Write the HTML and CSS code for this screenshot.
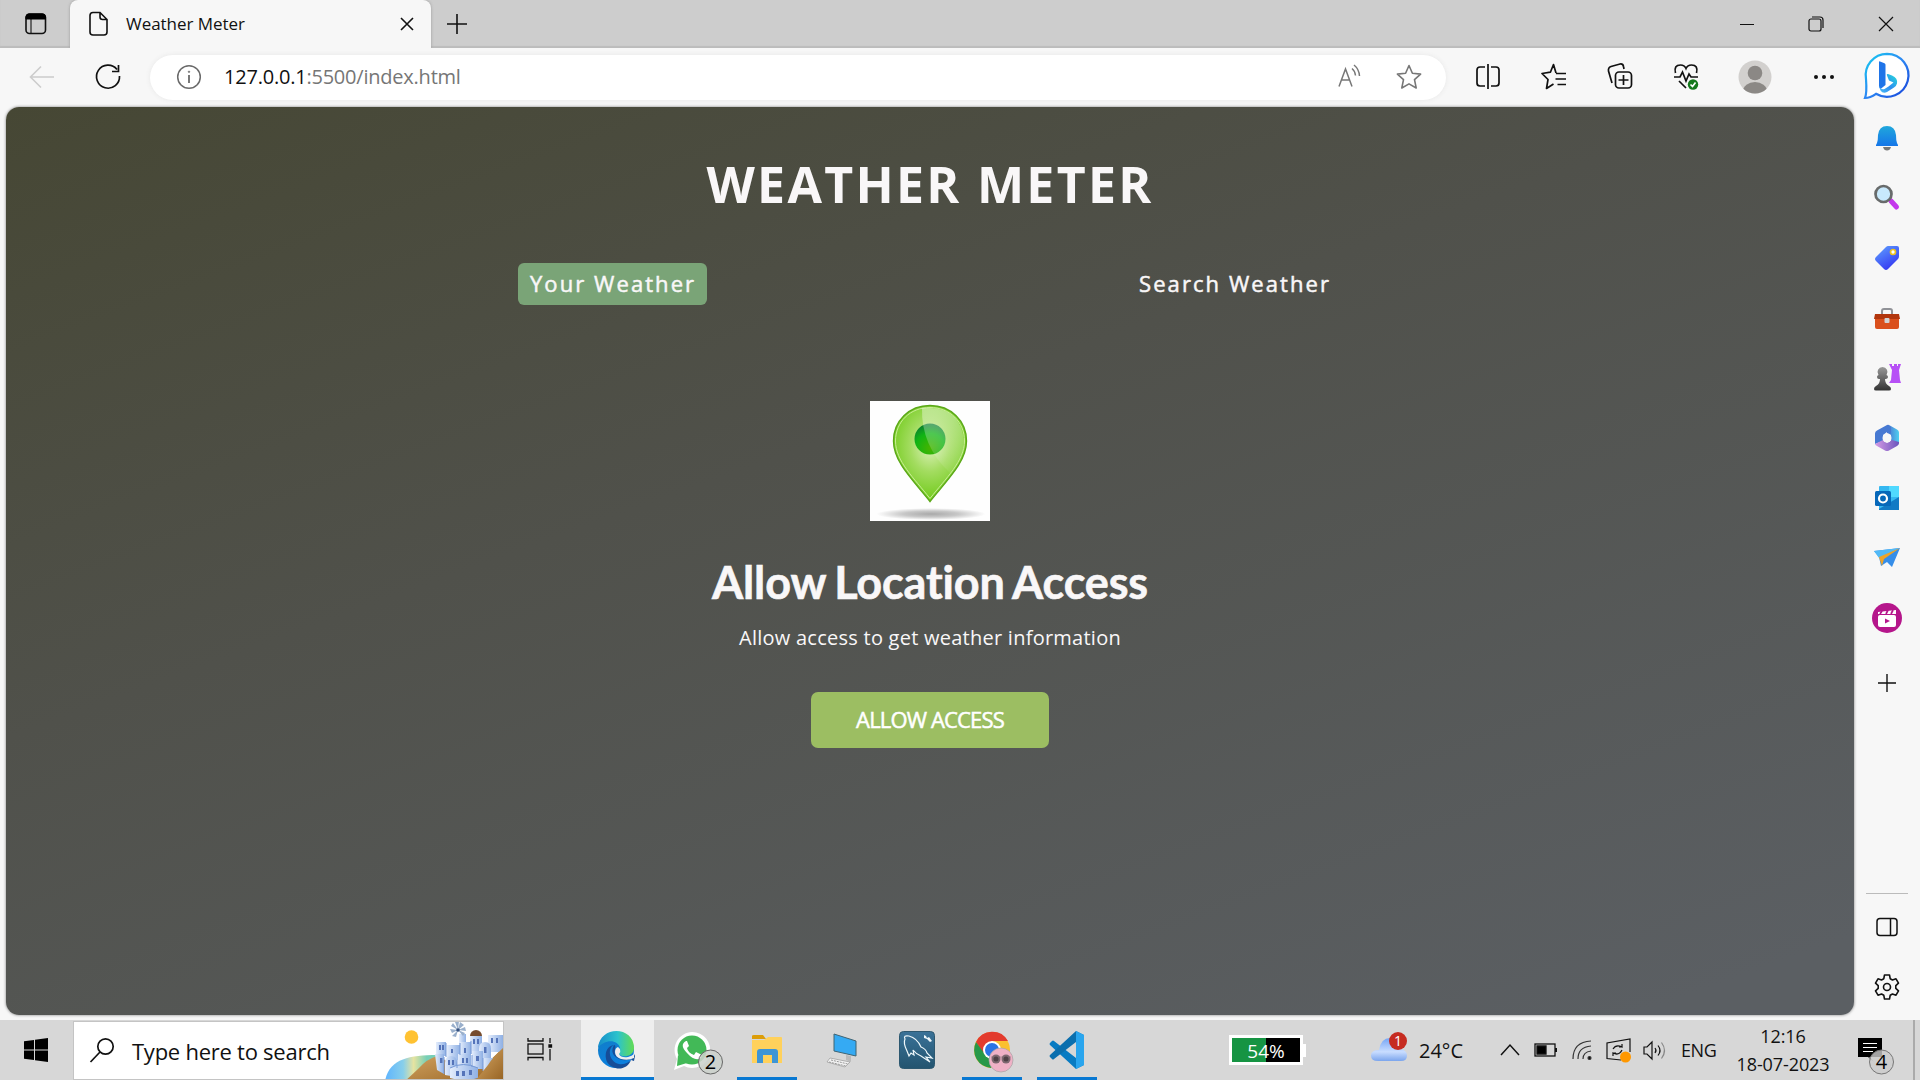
FILE: index.html
```
<!DOCTYPE html>
<html lang="en">
<head>
<meta charset="utf-8">
<title>Weather Meter</title>
<link rel="stylesheet" href="styles.css">
</head>
<body>
<header class="tabbar">
  <svg class="tab-actions" width="22" height="22" viewBox="0 0 22 22"><rect x="1" y="1" width="19.500" height="19.500" rx="3.500" fill="none" stroke="#111" stroke-width="1.600"/><path d="M1 6V4a3 3 0 0 1 3-3h13.500a3 3 0 0 1 3 3v2zM6 6v14" stroke="#000" fill="#000"/></svg>
  <div class="tab">
    <svg width="20" height="26" viewBox="0 0 20 26" fill="none" stroke="#111" stroke-width="1.600"><path d="M4 1.500h7L18 8.500V21q0 3-3 3H4q-3 0-3-3V4.500q0-3 3-3zM11 1.500V6q0 2.500 2.500 2.500H18"/></svg>
    <span class="tab-title">Weather Meter</span>
    <svg width="14" height="14" viewBox="0 0 14 14" stroke="#111" stroke-width="1.600"><path d="M1 1l12 12M13 1L1 13"/></svg>
  </div>
  <svg class="new-tab" width="22" height="22" viewBox="0 0 22 22" stroke="#111" stroke-width="1.600"><path d="M11 1v20M1 11h20"/></svg>
  <div class="window-controls">
    <svg width="14" height="16" viewBox="0 0 14 16" stroke="#111"><path d="M0 8.500h14"/></svg>
    <svg width="16" height="16" viewBox="0 0 16 16" fill="none" stroke="#111" stroke-width="1.200"><rect x="1" y="3" width="12" height="12" rx="2"/><path d="M4 1h8q3 0 3 3v8"/></svg>
    <svg width="16" height="16" viewBox="0 0 16 16" stroke="#111" stroke-width="1.200"><path d="M1 1l14 14M15 1L1 15"/></svg>
  </div>
</header>

<section class="toolbar">
  <svg class="back" width="26" height="24" viewBox="0 0 26 24" fill="none" stroke="#ccc" stroke-width="1.600"><path d="M25 12H2M12 1.500L1.500 12 12 22.500"/></svg>
  <svg class="reload" width="26" height="26" viewBox="0 0 26 26" fill="none" stroke="#111" stroke-width="1.700"><path d="M24.500 12A11.500 11.500 0 1 1 22 5.500M23.500 1v6.500H17"/></svg>
  <div class="address">
    <svg width="26" height="26" viewBox="0 0 26 26" fill="none" stroke="#6a6a6a" stroke-width="1.500"><circle cx="13" cy="13" r="11.300"/><path d="M13 11v8" stroke-width="1.800"/><circle cx="13" cy="7.800" r=".8" fill="#6a6a6a" stroke-width=".6"/></svg>
    <span class="url"><b>127.0.0.1</b>:5500/index.html</span>
    <svg class="read-aloud" width="26" height="24" viewBox="0 0 26 24" fill="none" stroke="#777" stroke-width="1.500"><path d="M2 21.500L8.500 4 15 21.500M4.500 15h8M15 3.500q3 2.500 3.500 7M17 0q5 4 5.500 11"/></svg>
    <svg class="star" width="26" height="26" viewBox="0 0 26 26" fill="none" stroke="#777" stroke-width="1.600" stroke-linejoin="round"><path d="M13 1.500l3.400 7.700 8.200.9-6.100 5.600 1.700 8.300L13 19.900 5.800 24l1.700-8.300L1.400 10.100l8.200-.9z"/></svg>
  </div>
  <div class="tools">
    <svg width="26" height="28" viewBox="0 0 26 28" fill="none" stroke="#111" stroke-width="1.700"><path d="M10 4H5Q2 4 2 7v13q0 3 3 3h5M16 4h5q3 0 3 3v13q0 3-3 3h-5M13 1v25"/></svg>
    <svg width="26" height="28" viewBox="0 0 26 28" fill="none" stroke="#111" stroke-width="1.700" stroke-linejoin="round"><path d="M15 10L12.500 1.500 9.400 9.200 1 10.500l6 6-1.500 9 7-4.500M15 10.500h10M14.500 16H25M16.500 21.500H25"/></svg>
    <svg width="26" height="28" viewBox="0 0 26 28" fill="none" stroke="#111" stroke-width="1.700"><path d="M5 20L1.500 8Q1 4.500 4 3.500L13 1q3-.5 3.500 2.500L17 6"/><rect x="8.500" y="9" width="16" height="16" rx="3.500"/><path d="M16.500 12v10M11.500 17h10"/></svg>
    <svg width="28" height="28" viewBox="0 0 28 28" fill="none" stroke="#111" stroke-width="1.700"><path d="M2.500 10q-2-8 5-8 4 0 5.500 3.500Q14.500 2 18.500 2q7 0 5 8M1 14h6l2.500-5 3.500 9 3-7 2 3h7M6 18l7 7"/><circle cx="20" cy="21.500" r="5.200" fill="#15791c" stroke="none"/><path d="M17.500 21.500l2 2 3-4" stroke="#fff"/></svg>
    <svg class="profile" width="34" height="34" viewBox="0 0 34 34"><defs><clipPath id="avatar"><circle cx="17" cy="17" r="16.500"/></clipPath></defs><circle cx="17" cy="17" r="16.500" fill="#d2d0ce"/><g fill="#8b8885" clip-path="url(#avatar)"><circle cx="17" cy="13" r="7.300"/><ellipse cx="17" cy="31" rx="12" ry="9"/></g></svg>
    <svg width="22" height="6" viewBox="0 0 22 6" fill="#111"><circle cx="3" cy="3" r="2"/><circle cx="11" cy="3" r="2"/><circle cx="19" cy="3" r="2"/></svg>
  </div>
  <svg class="bing" width="48" height="50" viewBox="0 0 48 50"><defs><linearGradient id="bingRing" x2="1" y2="1"><stop stop-color="#16cdf0"/><stop offset=".5" stop-color="#2d87f3"/><stop offset="1" stop-color="#1640d8"/></linearGradient><linearGradient id="bingBowl" x1="1" x2="0" y2="1"><stop stop-color="#25dfd8"/><stop offset=".55" stop-color="#2f8df0"/><stop offset="1" stop-color="#48bdf8"/></linearGradient></defs><path d="M24 1.800a21.500 21.500 0 1 1-11 40Q7 46 2 46q2-5 1-19A21.500 21.500 0 0 1 24 1.800z" fill="#fff" stroke="url(#bingRing)" stroke-width="2.200"/><path d="M16 10q0-1 1-.6l4.500 1.800q1 .5 1 1.600V33l-5 4q-1.500-1-1.500-3z" fill="#1f74e8"/><path d="M16.500 34q1 4 5 3l4-2.500 5-4-4.500-2-2-5q-.8-2 1-1.500l4 1.500q6 2.500 5 8-.6 2.500-3 4l-7 4.500q-4 2-6.500-1.500-1.200-2-1-4.500z" fill="url(#bingBowl)"/></svg>
</section>

<div class="browser-body">
  <main class="page">
    <h1>WEATHER METER</h1>
    <nav class="weather-tabs">
      <a class="weather-tab active">Your Weather</a>
      <a class="weather-tab">Search Weather</a>
    </nav>
    <section class="grant">
      <svg class="pin" width="120" height="120" viewBox="0 0 120 120">
        <defs>
          <radialGradient id="pinFill" cx=".5" cy=".42" r=".6"><stop stop-color="#def2bc"/><stop offset=".45" stop-color="#a3dc60"/><stop offset="1" stop-color="#6cc914"/></radialGradient>
          <radialGradient id="pinHole" cx=".5" cy=".8" r=".8"><stop stop-color="#46b400"/><stop offset=".6" stop-color="#10b414"/><stop offset="1" stop-color="#0a7c30"/></radialGradient>
          <radialGradient id="pinShadow"><stop stop-color="#a9a9a9"/><stop offset=".5" stop-color="#c7c7c7"/><stop offset="1" stop-color="#fff"/></radialGradient>
          <linearGradient id="pinGloss" x2="0" y2="1"><stop stop-color="#fff" stop-opacity=".4"/><stop offset="1" stop-color="#fff" stop-opacity=".05"/></linearGradient>
        </defs>
        <rect width="120" height="120" fill="#fefefe"/>
        <ellipse cx="61" cy="113" rx="55" ry="6" fill="url(#pinShadow)"/>
        <path d="M60 4.500C39 4.500 23.500 20 23.500 40 23.500 61 43 79 60 100.500 77 79 96.500 61 96.500 40 96.500 20 81 4.500 60 4.500z" fill="url(#pinFill)" stroke="#5ba818" stroke-width="1.400"/>
        <path d="M60 6.500C40 6.500 25.500 21 25.500 40 25.500 60 44 77 60 97.500 76 77 94.500 60 94.500 40 94.500 21 80 6.500 60 6.500z" fill="none" stroke="#c8ee95" stroke-width="1"/>
        <circle cx="60" cy="38" r="15.500" fill="url(#pinHole)"/>
        <path d="M52 7Q51 45 80 72 94 56 94 40 91 8 60 7z" fill="url(#pinGloss)"/>
      </svg>
      <h2>Allow Location Access</h2>
      <p>Allow access to get weather information</p>
      <button class="grant-button">ALLOW ACCESS</button>
    </section>
  </main>

  <aside class="sidebar">
    <svg width="24" height="28" viewBox="0 0 24 28"><defs><linearGradient id="bell" x2="0" y2="1"><stop stop-color="#20a8dc"/><stop offset="1" stop-color="#1676e8"/></linearGradient></defs><path d="M2 19q1-3 1-8Q4 2 12 2t9 9q0 5 1 8l1 2v1H1v-1z" fill="url(#bell)"/><path d="M8 23h8q-1 3.500-4 3.500T8 23z" fill="#777"/></svg>
    <svg width="26" height="28" viewBox="0 0 26 28"><path d="M17 17l5.500 6" stroke="#c438ec" stroke-width="5" stroke-linecap="round"/><circle cx="9.500" cy="10" r="8" fill="#c8e9fc" stroke="#686b6b" stroke-width="2.700"/></svg>
    <svg width="26" height="28" viewBox="0 0 26 28"><defs><linearGradient id="tagFill" x2=".6" y2="1"><stop stop-color="#60a4ff"/><stop offset="1" stop-color="#3538f2"/></linearGradient></defs><path d="M14 2h9q2 0 2 2v8q0 2-1 3L14 25q-2 2-4 0l-8-8q-2-2 0-4L12 3q1-1 2-1z" fill="url(#tagFill)"/><circle cx="19" cy="8" r="2.500" fill="#fff" stroke="#efc21e" stroke-width="1.700"/></svg>
    <svg width="28" height="28" viewBox="0 0 28 28"><path d="M9 10V7q0-2 2-2h6q2 0 2 2v3" fill="none" stroke="#909297" stroke-width="2"/><rect x="2" y="13" width="24" height="12" rx="2" fill="#da501d"/><path d="M2 10h24l1 5H1z" fill="#b2360d"/><rect x="11.500" y="14" width="5" height="5" rx="1" fill="#d2d3d5"/></svg>
    <svg width="28" height="30" viewBox="0 0 28 30"><defs><linearGradient id="pawn" x2="0" y2="1"><stop stop-color="#999"/><stop offset="1" stop-color="#333"/></linearGradient></defs><path d="M16 1h3v2h2V1h3v2h1V1h3l-2 6 1 10 1 3H16l2-3 1-10z" fill="#b750f6"/><path d="M9.500 4a5 5 0 0 1 4 8q1.500.5 1.500 2t-2 2h-1q0 5 4 7 2 1 2 3 0 1.500-2 1.500H3Q1 27.500 1 26q0-2 2-3 4-2 4-7H6q-2 0-2-2 0-1.500 1.500-2a5 5 0 0 1 4-8z" fill="url(#pawn)"/></svg>
    <svg width="26" height="28" viewBox="0 0 26 28"><defs><linearGradient id="officeTop"><stop stop-color="#4a6fd0"/><stop offset="1" stop-color="#4fd0f0"/></linearGradient><linearGradient id="officeBottom"><stop stop-color="#d69be4"/><stop offset="1" stop-color="#6b55bd"/></linearGradient></defs><path d="M13 1q1-.5 2 0l8 4.500q2 1 2 3V20l-8-3V11l-4-2z" fill="url(#officeTop)"/><path d="M13 1L3 6.500q-2 1-2 3V20l8-3v-6l4-3 4 2V3z" fill="#4779d2"/><path d="M1 20l8-4 4 3 5-3 7 2v1q0 2-2 3l-8 4.500q-2 1-4 0L3 22q-2-1-2-2z" fill="url(#officeBottom)"/><circle cx="13" cy="14" r="4.500" fill="#f7f7f7"/></svg>
    <svg width="26" height="26" viewBox="0 0 26 26"><rect x="5" y="1" width="20" height="24" rx="1" fill="#35b8f1"/><path d="M15 1h10v11H15z" fill="#50d9ff"/><path d="M5 24l20-12v13H5z" fill="#127ac5"/><rect x="1" y="6" width="16" height="15" rx="1.500" fill="#0768b9"/><circle cx="9" cy="13.500" r="4" fill="none" stroke="#fff" stroke-width="2.200"/></svg>
    <svg width="28" height="24" viewBox="0 0 28 24"><path d="M1 5l26-3-8 19-5-5-6 4-2-9z" fill="#368ee9"/><path d="M1 5l26-3-21 10z" fill="#51b9f6"/><path d="M27 2L6 11l3 9 2-7z" fill="#eea429"/></svg>
    <svg width="30" height="30" viewBox="0 0 30 30"><circle cx="15" cy="15" r="15" fill="#b5168b"/><rect x="6" y="12" width="18" height="12" rx="2" fill="#fff"/><path d="M6 9l18-2v4H6z" fill="#fff"/><path d="M10 8l-2 3M16 7l-2 4M21 7l-2 4" stroke="#b5168b" stroke-width="1.700"/><path d="M13 15.500v5l5-2.500z" fill="#b5168b"/></svg>
    <svg class="side-add" width="18" height="18" viewBox="0 0 18 18" stroke="#111" stroke-width="1.400"><path d="M9 0v18M0 9h18"/></svg>
    <div class="side-foot">
      <svg width="22" height="20" viewBox="0 0 22 20" fill="none" stroke="#111" stroke-width="1.500"><rect x="1" y="1.500" width="20" height="17" rx="3"/><path d="M14.500 2v17"/></svg>
      <svg width="26" height="26" viewBox="0 0 26 26" fill="none" stroke="#111" stroke-width="1.600" stroke-linejoin="round"><path d="M10.500 1h5l.7 3.700 2.300 1.300L22 4.800l2.500 4.300-2.700 2.500v2.800l2.700 2.500-2.500 4.300-3.500-1.200-2.300 1.300-.7 3.700h-5l-.7-3.700L7.500 20 4 21.200l-2.500-4.300 2.700-2.500v-2.800L1.500 9.100 4 4.800 7.500 6l2.300-1.300z"/><circle cx="13" cy="13" r="3.500"/></svg>
    </div>
  </aside>
</div>

<footer class="taskbar">
  <div class="start"><svg width="24" height="24" viewBox="0 0 24 24"><path d="M0 3.300L10 2v9.500H0zM11 1.800L24 0v11.500H11zM0 12.500h10V22L0 20.700zM11 12.500h13V24l-13-1.800z"/></svg></div>
  <div class="search">
    <svg width="25" height="26" viewBox="0 0 25 26" fill="none" stroke="#111" stroke-width="1.700"><circle cx="15.500" cy="8.500" r="7.700"/><path d="M10 14L.5 24"/></svg>
    <span>Type here to search</span>
    <svg class="art" width="118" height="60" viewBox="0 0 118 60">
      <defs><linearGradient id="sea" x2="1" y2="0"><stop stop-color="#5eb4ff"/><stop offset=".35" stop-color="#88cfea"/><stop offset=".55" stop-color="#e6e3a0"/><stop offset=".8" stop-color="#77cfb6"/></linearGradient><linearGradient id="hill" x2="1" y2="1"><stop stop-color="#d9aa68"/><stop offset="1" stop-color="#966323"/></linearGradient><linearGradient id="house"><stop stop-color="#e4edfc"/><stop offset="1" stop-color="#8fb0e4"/></linearGradient></defs>
      <circle cx="26.500" cy="16" r="6.800" fill="#ffc232"/>
      <path d="M0 60C4 38 24 34 52 34v26z" fill="url(#sea)"/>
      <path d="M20 60q9-8 14-13 8-9 18-12l20 10 28-1 18-17v33z" fill="url(#hill)"/>
      <g fill="url(#house)">
        <path d="M74 13h7v14h-7z"/><path d="M85 15h12v18H85z"/><path d="M103 14h15v17h-15z"/>
        <path d="M51 21h10v14H51z"/><path d="M62 24h13v15H62z"/><path d="M75 21h11v16H75z"/>
        <path d="M94 28q0-7 6-7t6 7v13H94z"/><path d="M50 33h9v20l-7-4z"/><path d="M60 42q0-7 6-7t6 7v14l-12-2z"/>
        <path d="M73 33h13v13H73z"/><path d="M87 30h11v18H87z"/><path d="M98 37h12L98 58z"/><path d="M65 47q13-7 28 0v10q-14 4-28 0z"/>
      </g>
      <path d="M85 15a6 6 0 0 1 12 0z" fill="#764c2e"/>
      <g fill="none" stroke="#7498d6" stroke-width="1"><path d="M61 22v14M75 22v12M86 20v13M72 39v8M87 34v12M98 37v13M59 36v17M65 47q13-7 28 0"/></g>
      <g fill="#9ab0cc"><path d="M73 9l-8-1 2 4zM73 9l-5-7-2 3zM73 9l1-9-4 1zM73 9l6-5-4-3zM73 9l8 1-1-4zM73 9l5 6 2-3zM73 9l-6 6 4 1z"/></g>
      <circle cx="73" cy="9" r="1.800" fill="#34507f"/>
      <g fill="#5574b9"><rect x="54" y="24" width="2" height="5"/><rect x="57" y="24" width="2" height="5"/><rect x="55" y="37" width="2.500" height="5"/><rect x="63" y="39" width="2" height="5"/><rect x="67" y="39" width="2" height="5"/><rect x="66" y="28" width="2" height="4"/><rect x="77" y="37" width="2" height="5"/><rect x="81" y="37" width="2" height="5"/><rect x="79" y="27" width="2" height="5"/><rect x="88" y="18" width="2" height="5"/><rect x="92" y="18" width="2" height="5"/><rect x="106" y="17" width="2" height="5"/><rect x="111" y="17" width="2" height="5"/><rect x="99" y="26" width="2.500" height="6"/><rect x="91" y="35" width="3" height="5"/><rect x="71" y="50" width="3" height="5"/><rect x="77" y="50" width="3" height="5"/><rect x="84" y="49" width="3" height="5"/></g>
      <path d="M118 27q-11 10-15 17L90 60h28z" fill="url(#hill)"/>
    </svg>
  </div>
  <div class="task-view"><svg width="26" height="26" viewBox="0 0 26 26" fill="none" stroke="#111" stroke-width="1.300"><rect x="1" y="7" width="15" height="10"/><path d="M1 1v3h15V1M1 23.500v-3h15v3M23 1v5M23 12v11.500"/><path d="M22 8h2.500v2H22z" fill="#111"/></svg></div>
  <div class="apps">
    <div class="app current"><svg width="36" height="38" viewBox="0 0 36 38"><defs><linearGradient id="edgeTop"><stop stop-color="#168dcb"/><stop offset=".55" stop-color="#2cc3cc"/><stop offset="1" stop-color="#63dc50"/></linearGradient><linearGradient id="edgeLeft" x2=".4" y2="1"><stop stop-color="#127dc4"/><stop offset="1" stop-color="#0b80df"/></linearGradient></defs><circle cx="18" cy="19" r="18" fill="url(#edgeLeft)"/><path d="M0 17C2-6 36-5 36 17c0 8-10 10-14 7-3-2 1-3 0-7C20 8 6 8 0 17z" fill="url(#edgeTop)"/><path d="M16 14c-7 3-5 17 5 19 6 1 10-2 12-4-4 11-18 11-24 2-3-7-1-16 7-17z" fill="#164d98"/><path d="M16 14q-5 9 5 14 7 3 13-1 2-2 2-4l1 2-1 5-3-1q2-3-1-2l-10 1q-7-4-5-10 1-4-1-4z" fill="#164d98"/><path d="M22 18q1 3-1 5 2 4 9 3 4-1 6-3v4q-6 3-13 1-6-2-6-7 0-4 3-5z" fill="#eee"/></svg></div>
    <div class="app wide-badge"><svg width="50" height="46" viewBox="0 0 50 46"><path d="M18 0a18 18 0 1 1-8 34L0 38l3-11A18 18 0 0 1 18 0z" fill="#fff"/><circle cx="18" cy="18" r="14.500" fill="#42b957"/><path d="M4 23l-1 11 10-3z" fill="#42b957"/><path d="M12 9q-7 4 1 12 8 9 14 5l1-3-6-3-2 3q-6-2-7-7l2-2-2-5z" fill="#fff"/><circle cx="36.500" cy="30" r="12" fill="#ccd2cc" fill-opacity=".88" stroke="#666"/><text x="36.500" y="37" text-anchor="middle" class="badge-text">2</text></svg></div>
    <div class="app running"><svg width="32" height="30" viewBox="0 0 32 30"><path d="M1 1q0-1 2-1h9l3 4H1z" fill="#dc9d08"/><path d="M1 5h12l4-3h13q1 0 1 1v25H1z" fill="#ffd15b"/><path d="M6 28V17q0-3 3-3h15q3 0 3 3v11h-6v-8h-9v8z" fill="#3d95d6"/></svg></div>
    <div class="app"><svg width="34" height="34" viewBox="0 0 34 34"><path d="M9 1l22 7v15L9 18z" fill="#35aaf3" stroke="#3f6473"/><path d="M21 22v5l5 2v-6" fill="#bbb"/><path d="M5 25l20 4-5 5-18-5z" fill="#f2f2f2" stroke="#999" stroke-width=".7"/><path d="M6 27l17 4M4 29l17 4" stroke="#999" stroke-dasharray="2 1"/></svg></div>
    <div class="app"><svg width="36" height="38" viewBox="0 0 36 38"><defs><linearGradient id="sql" x2="0" y2="1"><stop stop-color="#3a7298"/><stop offset="1" stop-color="#23546f"/></linearGradient></defs><rect x=".5" y=".5" width="35" height="37" rx="4" fill="url(#sql)" stroke="#2d5870"/><path d="M12 22l-2 3-2-5Q4 12 6 8q-2-4 4-3 8 2 12 11 5 2 6 6l5 5-6-1 4 5-9-6q-5-2-8-6l1 5z" fill="none" stroke="#eff8fb" stroke-width="1.200"/><path d="M25 4l2 1 1 2 2-1 3 4-2 1-3-3-3-1z" fill="#eff8fb"/></svg></div>
    <div class="app running chrome"><svg width="40" height="42" viewBox="0 0 40 42"><circle cx="18" cy="19" r="18" fill="#fbc02f"/><path d="M2 11A18 18 0 0 1 34 10H18L11 25z" fill="#e33b2e"/><path d="M2 11a18 18 0 0 0 15 26l5-11h-9z" fill="#279848"/><circle cx="18" cy="19" r="9" fill="#fff"/><circle cx="18" cy="19" r="7" fill="#2b74e5"/><circle cx="27" cy="29" r="12" fill="#efb1c6" stroke="#a5a5a5" stroke-width=".7"/><path d="M17 26h20" stroke="#a98a95"/><g fill="#7d6870"><circle cx="22" cy="28" r="4.500"/><circle cx="32" cy="28" r="4.500"/></g><g fill="#4e4146"><circle cx="22" cy="28" r="2.500"/><circle cx="32" cy="28" r="2.500"/></g></svg></div>
    <div class="app running"><svg width="36" height="38" viewBox="0 0 36 38"><path d="M27 0l8 4v30l-8 4L1 14q-1-1 0-2l2-2q1-1 2 0l22 17z" fill="#087bc2"/><path d="M27 0L1 24q-1 1 0 2l2 2q1 1 2 0L27 11z" fill="#0b6fae"/><path d="M27 0l8 4v30l-8 4z" fill="#29a5ee"/></svg></div>
  </div>
  <div class="battery"><div class="battery-meter">54%</div><i></i></div>
  <div class="weather"><svg width="37" height="44" viewBox="0 0 37 44"><defs><linearGradient id="cloud" x2="0" y2="1"><stop stop-color="#75a5f5"/><stop offset=".6" stop-color="#c9ddff"/><stop offset="1" stop-color="#7ba5ed"/></linearGradient></defs><path d="M7 33q-7 0-7-5.500T8 22q2-12 11-12 10 0 11 11 6 1.500 6 6.500 0 5.500-6 5.500z" fill="url(#cloud)"/><circle cx="27" cy="13" r="9" fill="#c62b20"/><text x="27" y="18" text-anchor="middle" class="alert-text">1</text></svg><span>24°C</span></div>
  <div class="tray">
    <svg width="20" height="14" viewBox="0 0 20 14" fill="none" stroke="#111" stroke-width="1.500"><path d="M1 12L10 2l9 10"/></svg>
    <svg width="24" height="16" viewBox="0 0 24 16" fill="none" stroke="#111" stroke-width="1.300"><rect x="1" y="2" width="20" height="12"/><path d="M3 4h9v8H3z" fill="#000"/><path d="M22 6v4" stroke-width="2"/></svg>
    <svg width="20" height="20" viewBox="0 0 20 20" fill="none" stroke="#333" stroke-width="1.200"><path d="M1 19Q1 2 19 1M6 19Q6 7 19 6M11 19q0-7 8-8"/><circle cx="17.500" cy="18" r="1.500" fill="#111"/></svg>
    <svg width="26" height="26" viewBox="0 0 26 26" fill="none" stroke="#111" stroke-width="1.200"><path d="M15 23L1 21.500V6l23-4v13M7 12q3-5 9-2V7M16 10h-3M16 13q-3 6-9 3v3M7 16h3"/><circle cx="19.500" cy="20" r="5.500" fill="#ff9800" stroke="none"/></svg>
    <svg class="volume" width="22" height="20" viewBox="0 0 22 20" fill="none" stroke="#111" stroke-width="1.200"><path d="M1 7h3l5-5v17l-5-5H1zM12 8q2 2.500 0 5M15 5.500q4 5 0 10"/><path d="M18.500 2.500q6 8 0 16" stroke="#888"/></svg>
    <span>ENG</span>
  </div>
  <div class="clock"><span>12:16</span><span>18-07-2023</span></div>
  <svg class="notice" width="38" height="40" viewBox="0 0 38 40"><path d="M0 0h24v19H11l5 5-6-5H0z" fill="#000"/><path d="M5 5.500h14M5 9.500h14M5 13.500h10" stroke="#fff" stroke-width="1.200"/><circle cx="23.500" cy="24" r="12" fill="#ccc" fill-opacity=".8" stroke="#777"/><text x="23.500" y="31" text-anchor="middle" class="badge-text">4</text></svg>
  <div class="show-desktop"></div>
</footer>
</body>
</html>
```
FILE: styles.css
```
* { box-sizing: border-box; }
body { margin: 0; width: 1920px; height: 1080px; display: flex; flex-direction: column; overflow: hidden; background: #f7f7f7; color: #111; font-family: "Open Sans", "Noto Sans", sans-serif; }
svg { display: block; flex: none; overflow: visible; }

.tabbar { height: 48px; flex: none; display: flex; align-items: center; background: #cdcdcd; box-shadow: inset 0 -2px 1px #bcbcbc; }
.tab-actions { margin-left: 25px; }
.tab { width: 361px; height: 48px; margin-left: 23px; padding: 0 17px 0 19px; display: flex; align-items: center; background: #f7f7f7; border-radius: 8px 8px 0 0; box-shadow: 0 0 3px #999; clip-path: inset(0 -4px 0 -4px); }
.tab-title { flex: 1; margin-left: 17px; padding-bottom: 2px; font-size: 17px; letter-spacing: -.05px; }
.new-tab { margin-left: 15px; }
.window-controls { margin-left: auto; margin-right: 26px; display: flex; align-items: center; gap: 54px; }

.toolbar { height: 59px; flex: none; display: flex; align-items: center; padding: 0 9px 1px 29px; }
.back { margin-right: 40px; }
.address { width: 1296px; height: 45px; flex: none; margin-left: 29px; padding: 0 24px 1px 26px; display: flex; align-items: center; background: #fff; border-radius: 23px; box-shadow: 0 0 5px #e7e7e7; }
.url { flex: 1; margin-left: 22px; font-size: 20px; letter-spacing: -.22px; color: #767676; }
.url b { font-weight: 400; color: #111; }
.star { margin-left: 33px; }
.tools { flex: 1; display: flex; align-items: center; margin-left: 29px; gap: 40px; }
.tools .profile { margin: 0 1px 0 -3px; }

.browser-body { height: 913px; flex: none; display: flex; padding: 0 0 5px 6px; }
.page { width: 1848px; height: 908px; border-radius: 13px; background: linear-gradient(160deg, #464734, #50514b 40%, #5b5f63 95%); box-shadow: 0 0 3px #777; color: #f9f7f8; display: flex; flex-direction: column; align-items: center; }
.page h1 { margin: 41px 0 0; height: 72px; font-size: 50px; line-height: 72px; font-weight: 700; letter-spacing: 2.3px; white-space: nowrap; }
.weather-tabs { width: 824px; margin-top: 43px; display: flex; justify-content: space-between; }
.weather-tab { height: 42px; padding: 0 11px 0 12px; border-radius: 6px; font-size: 22px; line-height: 41px; letter-spacing: 2.07px; -webkit-text-stroke: .5px currentColor; white-space: nowrap; }
.weather-tab.active { background: #7aa477; }
.grant { margin-top: 96px; display: flex; flex-direction: column; align-items: center; }
.grant h2 { margin: 30px 0 0; font-family: Lato, "Open Sans", sans-serif; font-size: 45px; line-height: 62px; font-weight: 700; font-variant-ligatures: none; letter-spacing: -.15px; word-spacing: -2px; -webkit-text-stroke: .6px currentColor; white-space: nowrap; }
.grant p { margin: 10px 0 0; font-size: 20px; line-height: 30px; letter-spacing: .25px; white-space: nowrap; }
.grant-button { width: 238px; height: 56px; margin-top: 39px; padding: 0 0 2px; border: 0; border-radius: 7px; background: #9cbe62; color: #fff; font-family: inherit; font-size: 22px; letter-spacing: -.85px; -webkit-text-stroke: .5px currentColor; white-space: nowrap; }

.sidebar { width: 66px; display: flex; flex-direction: column; align-items: center; padding-top: 16px; }
.sidebar > svg { height: 30px; margin-bottom: 30px; }
.sidebar > .side-add { margin-top: 5px; }
.side-foot { width: 42px; margin-top: auto; border-top: 1px solid #bbb; display: flex; flex-direction: column; align-items: center; padding: 23px 0 15px; gap: 37px; }

.taskbar { height: 60px; flex: none; display: flex; background: #d7d7d7; }
.start { width: 73px; padding-right: 2px; display: flex; align-items: center; justify-content: center; }
.search { width: 431px; height: 59px; margin-top: 1px; border: 1px solid #c4c4c4; background: #fff; display: flex; align-items: center; padding-left: 16px; overflow: hidden; }
.search span { margin-left: 17px; font-size: 22px; letter-spacing: -.25px; white-space: nowrap; }
.art { margin-left: auto; }
.task-view { width: 77px; padding-right: 6px; display: flex; align-items: center; justify-content: center; }
.apps { display: flex; gap: 15px; }
.app { width: 60px; height: 60px; display: flex; align-items: center; justify-content: center; }
.app.current { width: 73px; margin-right: -7px; padding-right: 3px; background: #eee; box-shadow: inset 0 -3px #0878d2; }
.app.running { box-shadow: inset 0 -3px #0878d2; }
.app.wide-badge { align-items: flex-start; justify-content: flex-start; padding: 12px 0 0 12px; }
.app.chrome { padding: 3px 0 0 3px; }
.badge-text { font: 20px "Open Sans", sans-serif; }
.battery { width: 77px; height: 30px; margin: 15px 0 0 132px; display: flex; align-items: center; }
.battery-meter { width: 74px; height: 30px; border: 3px solid #fff; background: linear-gradient(90deg, #169443 50%, #000 50%); color: #fff; text-align: center; font-size: 19px; line-height: 26px; }
.battery i { width: 3px; height: 13px; background: #fff; }
.weather { width: 94px; display: flex; align-items: center; margin-left: 65px; gap: 11px; font-size: 20px; white-space: nowrap; }
.alert-text { font: 14px "Open Sans", sans-serif; fill: #fff; }
.tray { width: 217px; display: flex; align-items: center; margin-left: 35px; gap: 14px; font-size: 18px; letter-spacing: -.4px; }
.volume { margin-left: -3px; }
.tray span { margin-left: 2px; }
.clock { width: 96px; margin-left: 18px; display: flex; flex-direction: column; align-items: center; padding-top: 2px; font-size: 18px; line-height: 28px; letter-spacing: -.1px; white-space: nowrap; }
.notice { margin: 18px 0 0 27px; }
.show-desktop { width: 7px; margin-left: auto; border-left: 2px solid #aaa; }
```
